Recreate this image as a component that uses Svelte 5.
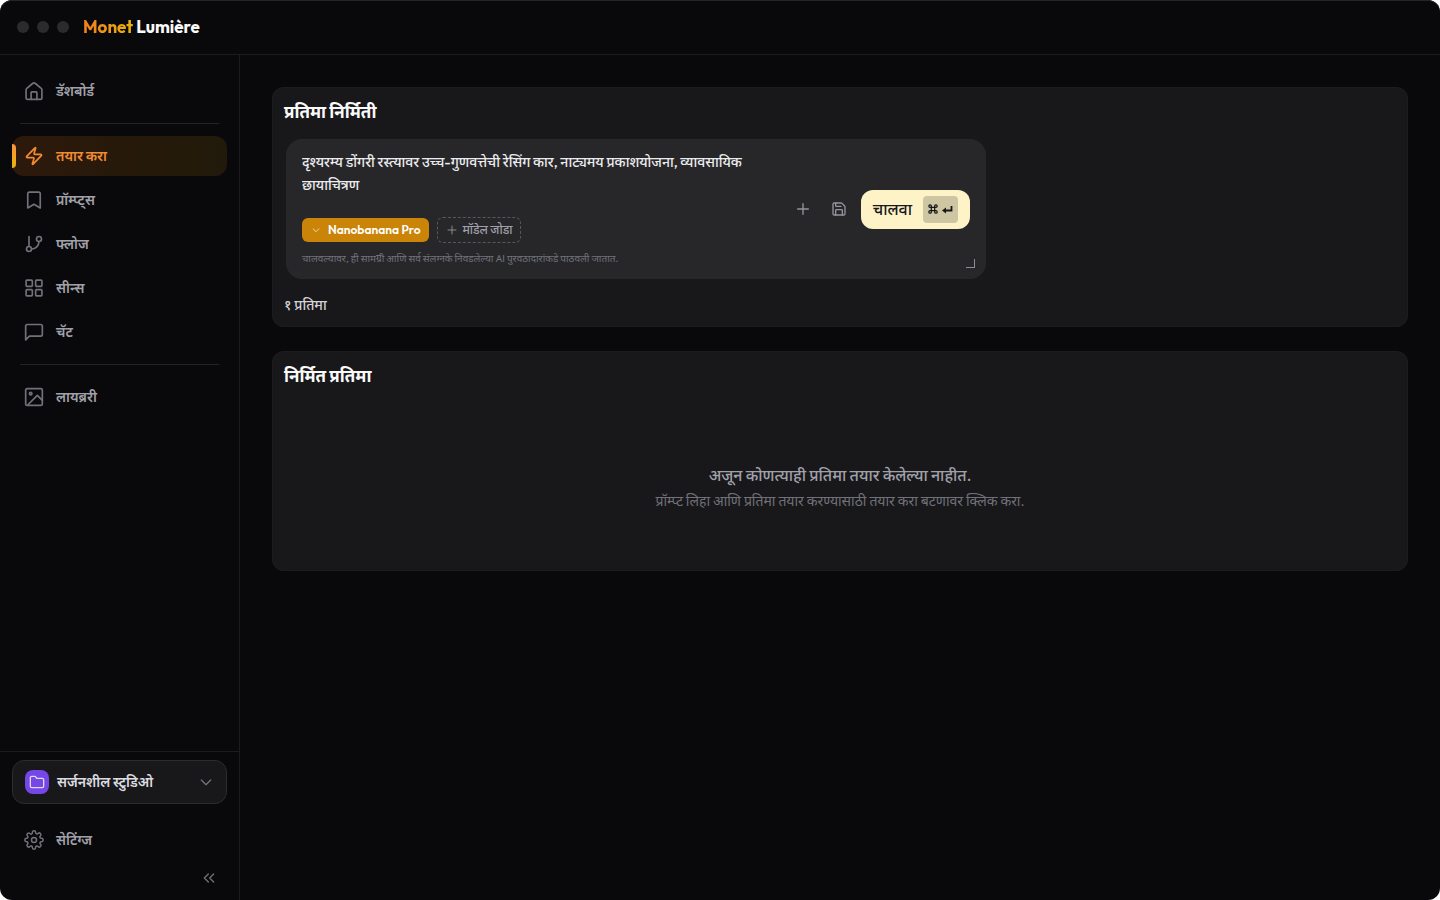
<script>
  const groups = [
    [{ label: 'डॅशबोर्ड', icon: 'home' }],
    [
      { label: 'तयार करा', icon: 'bolt', active: true },
      { label: 'प्रॉम्प्ट्स', icon: 'bookmark' },
      { label: 'फ्लोज', icon: 'branch' },
      { label: 'सीन्स', icon: 'grid' },
      { label: 'चॅट', icon: 'chat' }
    ],
    [{ label: 'लायब्ररी', icon: 'image' }]
  ];
  let prompt = $state('दृश्यरम्य डोंगरी रस्त्यावर उच्च-गुणवत्तेची रेसिंग कार, नाट्यमय प्रकाशयोजना, व्यावसायिक छायाचित्रण');
</script>

{#snippet icon(name, size)}
  <svg width={size} height={size} viewBox="0 0 24 24" fill="none" stroke="currentColor" stroke-width="2" stroke-linecap="round" stroke-linejoin="round" aria-hidden="true">
    {#if name === 'home'}
      <path d="M2.5 10.5a2 2 0 0 1 .8-1.6l7.4-6.2a2 2 0 0 1 2.6 0l7.4 6.2a2 2 0 0 1 .8 1.6V20a2 2 0 0 1-2 2h-15a2 2 0 0 1-2-2z" />
      <path d="M8.5 22v-8a1 1 0 0 1 1-1h5a1 1 0 0 1 1 1v8" />
    {:else if name === 'bolt'}
      <path d="M4 14a1 1 0 0 1-.78-1.63l9.9-10.2a.5.5 0 0 1 .86.46l-1.92 6.02A1 1 0 0 0 13 10h7a1 1 0 0 1 .78 1.63l-9.9 10.2a.5.5 0 0 1-.86-.46l1.92-6.02A1 1 0 0 0 11 14z" />
    {:else if name === 'bookmark'}
      <path d="M19.5 21.5 12 17l-7.5 4.5v-17a2 2 0 0 1 2-2h11a2 2 0 0 1 2 2z" />
    {:else if name === 'branch'}
      <path d="M6 3v12M18 9a9 9 0 0 1-9 9" /><circle cx="18" cy="6" r="3" /><circle cx="6" cy="18" r="3" />
    {:else if name === 'grid'}
      <rect x="2.5" y="2.5" width="7.5" height="7.5" rx="1" /><rect x="14" y="2.5" width="7.5" height="7.5" rx="1" /><rect x="14" y="14" width="7.5" height="7.5" rx="1" /><rect x="2.5" y="14" width="7.5" height="7.5" rx="1" />
    {:else if name === 'chat'}
      <path d="M22 15a2 2 0 0 1-2 2H6.5L2 21.5V5a2 2 0 0 1 2-2h16a2 2 0 0 1 2 2z" />
    {:else if name === 'image'}
      <rect x="2" y="2" width="20" height="20" rx="2" /><circle cx="8" cy="8" r="1.5" /><path d="m5 21 11-11 6 6" />
    {:else if name === 'gear'}
      <path stroke-width="1.8" d="M20.91 14a1.65 1.65 0 0 0-1.18 2.9l.06.06a2 2 0 0 1-2.83 2.83l-.06-.06A1.65 1.65 0 0 0 14 20.91V21a2 2 0 0 1-4 0v-.09a1.65 1.65 0 0 0-2.92-1.18l-.06.06a2 2 0 0 1-2.83-2.83l.06-.06A1.65 1.65 0 0 0 3.09 14H3a2 2 0 0 1 0-4h.09a1.65 1.65 0 0 0 1.18-2.82l-.06-.06a2 2 0 0 1 2.83-2.83l.06.06A1.65 1.65 0 0 0 10 3.09V3a2 2 0 0 1 4 0v.09a1.65 1.65 0 0 0 2.82 1.18l.06-.06a2 2 0 0 1 2.83 2.83l-.06.06A1.65 1.65 0 0 0 20.91 10H21a2 2 0 0 1 0 4z" /><circle cx="12" cy="12" r="3" stroke-width="1.8" />
    {:else if name === 'folder'}
      <path d="M22 18.5a2 2 0 0 1-2 2H4a2 2 0 0 1-2-2v-13a2 2 0 0 1 2-2h4.5a2 2 0 0 1 1.6.8l1.4 2.2H20a2 2 0 0 1 2 2z" />
    {:else if name === 'down'}
      <path d="m5 9 7 7 7-7" />
    {:else if name === 'collapse'}
      <path d="m11 18-6-6 6-6M19 18l-6-6 6-6" />
    {:else if name === 'plus'}
      <path d="M12 4v16M4 12h16" />
    {:else if name === 'save'}
      <path d="M15.2 3a2 2 0 0 1 1.4.6l3.8 3.8a2 2 0 0 1 .6 1.4V19a2 2 0 0 1-2 2H5a2 2 0 0 1-2-2V5a2 2 0 0 1 2-2z" /><path d="M17 21v-7a1 1 0 0 0-1-1H8a1 1 0 0 0-1 1v7M7 3v4a1 1 0 0 0 1 1h7" />
    {/if}
  </svg>
{/snippet}

<div class="window">
  <header>
    <div class="dots"><i></i><i></i><i></i></div>
    <div class="brand"><span>Monet</span> Lumière</div>
  </header>
  <div class="body">
    <aside>
      <nav>
        {#each groups as group, index}
          {#if index}<hr />{/if}
          <div class="group">
            {#each group as item}
              <a href="#{item.icon}" class="item" class:active={item.active} aria-current={item.active ? 'page' : undefined}>
                {@render icon(item.icon, 20)}<span>{item.label}</span>
              </a>
            {/each}
          </div>
        {/each}
      </nav>
      <div class="foot">
        <button class="workspace">
          <span class="badge">{@render icon('folder', 16)}</span>
          <span class="name">सर्जनशील स्टुडिओ</span>
          {@render icon('down', 16)}
        </button>
        <a href="#settings" class="item">{@render icon('gear', 20)}<span>सेटिंग्ज</span></a>
        <button class="collapse" aria-label="साइडबार लपवा">{@render icon('collapse', 16)}</button>
      </div>
    </aside>
    <main>
      <section class="card">
        <h2>प्रतिमा निर्मिती</h2>
        <div class="composer">
          <div class="entry">
            <textarea rows="2" aria-label="प्रॉम्प्ट" spellcheck="false" bind:value={prompt}></textarea>
            <div class="models">
              <button class="model">{@render icon('down', 10)}<span>Nanobanana Pro</span></button>
              <button class="add">{@render icon('plus', 12)}<span>मॉडेल जोडा</span></button>
            </div>
            <p class="note">चालवल्यावर, ही सामग्री आणि सर्व संलग्नके निवडलेल्या AI पुरवठादारांकडे पाठवली जातात.</p>
          </div>
          <div class="actions">
            <button class="tool" aria-label="जोडा">{@render icon('plus', 16)}</button>
            <button class="tool" aria-label="जतन करा">{@render icon('save', 16)}</button>
            <button class="run">
              <span>चालवा</span>
              <kbd>
                <svg width="10" height="10" viewBox="0 0 24 24" fill="none" stroke="currentColor" stroke-width="3" aria-hidden="true"><path d="M8 8h8v8H8zM8 8H5a3 3 0 1 1 3-3zM16 8V5a3 3 0 1 1 3 3zM16 16h3a3 3 0 1 1-3 3zM8 16v3a3 3 0 1 1-3-3z" /></svg>
                <svg width="11" height="10" viewBox="0 0 11 10" aria-hidden="true"><path d="M9.5 2v4.5H3" fill="none" stroke="currentColor" stroke-width="1.8" /><path d="M0 6.5 4 3.5v6z" fill="currentColor" /></svg>
              </kbd>
            </button>
          </div>
          <span class="grip"></span>
        </div>
        <p class="count">१ प्रतिमा</p>
      </section>
      <section class="card">
        <h2>निर्मित प्रतिमा</h2>
        <div class="empty">
          <p class="lead">अजून कोणत्याही प्रतिमा तयार केलेल्या नाहीत.</p>
          <p class="hint">प्रॉम्प्ट लिहा आणि प्रतिमा तयार करण्यासाठी तयार करा बटणावर क्लिक करा.</p>
        </div>
      </section>
    </main>
  </div>
</div>

<style>
  :global(body) { background: #fff; }
  * { box-sizing: border-box; }
  .window {
    min-height: 100vh;
    display: flex;
    flex-direction: column;
    overflow: hidden;
    border-radius: 12px;
    background: #09090b;
    box-shadow: inset 0 1px #252527;
    color: #fafafa;
    font: 500 14px/20px Outfit, "Noto Sans", "Noto Sans Devanagari", sans-serif;
  }
  button, textarea { font: inherit; color: inherit; border: 0; padding: 0; background: none; }
  button { cursor: pointer; }
  a { color: inherit; text-decoration: none; }
  p, h2 { margin: 0; }
  svg { display: block; flex: none; }
  header { height: 55px; display: flex; align-items: center; gap: 14px; padding: 0 17px; border-bottom: 1px solid #1c1c1f; }
  .dots { display: flex; gap: 8px; }
  .dots i { width: 12px; height: 12px; border-radius: 50%; background: #2b2b2d; }
  .brand { font-size: 17px; font-weight: 700; }
  .brand span { color: transparent; background: linear-gradient(90deg, #f0801c, #eab30c); background-clip: text; }
  .body { flex: 1; display: flex; }
  aside { width: 240px; flex: none; display: flex; flex-direction: column; justify-content: space-between; border-right: 1px solid #1c1c1f; }
  nav { padding: 16px 12px; }
  .group { display: flex; flex-direction: column; gap: 4px; }
  .item { position: relative; height: 40px; display: flex; align-items: center; gap: 12px; padding: 0 12px; border-radius: 12px; color: #a1a1aa; font-weight: 600; }
  .item :global(svg) { color: #717179; }
  .active, .active :global(svg) { color: #f28c33; }
  .active { background: linear-gradient(90deg, #2d190b, #211a0a); }
  .active::before { content: ""; position: absolute; left: 0; top: 8px; width: 4px; height: 24px; border-radius: 0 4px 4px 0; background: linear-gradient(#fb923c, #eab308); }
  hr { height: 1px; margin: 12px 8px; border: 0; background: #232326; }
  .foot { display: flex; flex-direction: column; padding: 8px 12px 4px; border-top: 1px solid #1c1c1f; }
  .workspace { height: 44px; display: flex; align-items: center; gap: 8px; padding: 0 12px; margin-bottom: 16px; border: 1px solid #2c2c2f; border-radius: 12px; background: #18181b; color: #dcdce0; font-weight: 600; text-align: left; }
  .workspace > :global(svg) { color: #717179; }
  .name { flex: 1; }
  .badge { width: 24px; height: 24px; display: grid; place-items: center; border-radius: 8px; background: #7546e8; }
  .collapse { align-self: flex-end; width: 36px; height: 36px; display: grid; place-items: center; color: #717179; }
  main { flex: 1; min-width: 0; display: flex; flex-direction: column; gap: 24px; padding: 32px; }
  .card { padding: 12px; border-radius: 12px; background: #18181b; box-shadow: inset 0 0 0 1px #1c1c1f; }
  h2 { font-size: 17px; line-height: 26px; font-weight: 700; }
  .composer { position: relative; max-width: 700px; display: flex; align-items: center; justify-content: space-between; margin: 14px 2px 16px; padding: 12px 16px; border-radius: 16px; background: #27272a; }
  .entry { flex: 1; max-width: 460px; }
  textarea { display: block; width: 100%; line-height: 23px; resize: none; overflow: hidden; outline: none; color: #ececee; }
  .models { display: flex; align-items: center; gap: 8px; margin: 20px 0 8px; }
  .model, .add { display: flex; align-items: center; border-radius: 6px; font-size: 12px; }
  .model { height: 24px; gap: 7px; padding: 0 9px; background: #ca8508; color: #fff; font-weight: 600; }
  .add { height: 26px; gap: 4px; padding: 0 8px; border: 1px dashed #57575d; color: #a1a1aa; }
  .add :global(svg), .model :global(svg) { opacity: .8; }
  .note { font-size: 10px; line-height: 16px; font-weight: 400; color: #71717a; white-space: nowrap; }
  .actions { display: flex; align-items: center; gap: 4px; }
  .tool { width: 32px; height: 32px; display: grid; place-items: center; color: #94949c; }
  .run { height: 39px; display: flex; align-items: center; gap: 11px; margin-left: 2px; padding: 0 12px; border-radius: 12px; background: #fef3c7; color: #18181b; font-size: 16px; }
  kbd { height: 27px; display: flex; align-items: center; gap: 4px; padding: 0 5px; border-radius: 4px; background: #cec6a3; }
  .grip { position: absolute; right: 11px; bottom: 11px; width: 9px; height: 9px; border: solid #8d8d94; border-width: 0 1px 1px 0; }
  .count { color: #d4d4d8; }
  .empty { padding: 73px 12px 45px; text-align: center; }
  .lead { font-size: 16px; line-height: 26px; color: #a1a1aa; }
  .hint { line-height: 26px; font-weight: 400; color: #71717a; }
</style>
